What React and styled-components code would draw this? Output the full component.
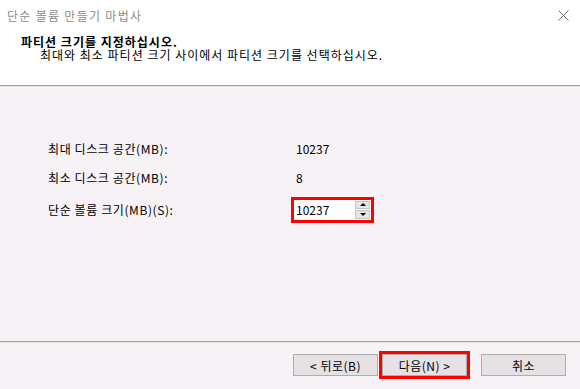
import React from 'react'
import styled, { createGlobalStyle } from 'styled-components'

const Global = createGlobalStyle`
    html, body {
        margin: 0;
        padding: 0;
        background: #ffffff;
    }
    body {
        font-family: "Noto Sans CJK KR", "Noto Sans", sans-serif;
        font-size: 12px;
        color: #000;
    }
`;

const Window = styled.div`
    width: 580px;
    height: 389px;
    display: flex;
    flex-direction: column;
    background: #f6f2f6;
    overflow: hidden;
`;

const TitleBar = styled.div`
    height: 30px;
    display: flex;
    align-items: center;
    justify-content: space-between;
    padding: 0 11px 0 7px;
    background: #ffffff;
    color: #8c8c8c;
    font-size: 12px;
    letter-spacing: 1.3px;
    box-sizing: border-box;
`;

const Close = styled.svg`
    width: 11px;
    height: 11px;
`;

const Header = styled.div`
    height: 55px;
    background: #ffffff;
    padding: 6px 0 0 21px;
    box-sizing: border-box;
    letter-spacing: 1px;
    h1 {
        margin: 0;
        font-size: 12px;
        font-weight: bold;
        line-height: 12px;
    }
    p {
        margin: 1px 0 0 19px;
        font-size: 12px;
        line-height: 12px;
    }
`;

const Divider = styled.div`
    height: 1px;
    background: #a0a0a0;
    border-bottom: 1px solid #e3e3e3;
`;

const Body = styled.div`
    flex: 1;
    padding: 47px 0 0 48px;
`;

const Row = styled.div`
    height: ${p => p.h}px;
    display: grid;
    grid-template-columns: 243px auto;
    align-items: center;
`;

const Label = styled.span`
    letter-spacing: 0.6px;
`;

const Value = styled.span`
    padding-left: 5px;
`;

const Spin = styled.div`
    width: 77px;
    height: 20px;
    display: flex;
    background: #ffffff;
    outline: 3px solid #ff0000;
    margin-left: 3px;
    box-sizing: border-box;
    span {
        flex: 1;
        padding-left: 2px;
        line-height: 20px;
    }
`;

const SpinButtons = styled.div`
    width: 15px;
    display: flex;
    flex-direction: column;
    margin: 1px 1px 1px 0;
    gap: 1px;
`;

const SpinButton = styled.div`
    flex: 1;
    background: #e6e6e6;
    border: 1px solid #c4c4c4;
    display: flex;
    align-items: center;
    justify-content: center;
    &::after {
        content: "";
        border-left: 3px solid transparent;
        border-right: 3px solid transparent;
        ${p => p.up ? 'border-bottom: 3px solid #000;' : 'border-top: 3px solid #000;'}
    }
`;

const Footer = styled.div`
    height: 46px;
    display: flex;
    align-items: center;
    justify-content: flex-end;
    padding: 0 14px 2px 0;
    box-sizing: border-box;
`;

const Button = styled.div`
    width: 85px;
    height: 22px;
    box-sizing: border-box;
    border: 1px solid #adadad;
    background: #e5e1e5;
    display: flex;
    align-items: center;
    justify-content: center;
    font-size: 12px;
    letter-spacing: 0.5px;
    margin-left: ${p => p.gap}px;
    ${p => p.marked && 'outline: 3px solid #ff0000; outline-offset: 0px;'}
`;

export default function App() {
    return (
        <Window>
            <Global />
            <TitleBar>
                <span>단순 볼륨 만들기 마법사</span>
                <Close viewBox="0 0 11 11">
                    <path d="M0.5 0.5 L10.5 10.5 M10.5 0.5 L0.5 10.5" stroke="#666" strokeWidth="1" fill="none" />
                </Close>
            </TitleBar>
            <Header>
                <h1>파티션 크기를 지정하십시오.</h1>
                <p>최대와 최소 파티션 크기 사이에서 파티션 크기를 선택하십시오.</p>
            </Header>
            <Divider />
            <Body>
                <Row h={29}>
                    <Label>최대 디스크 공간(MB):</Label>
                    <Value>10237</Value>
                </Row>
                <Row h={29}>
                    <Label>최소 디스크 공간(MB):</Label>
                    <Value>8</Value>
                </Row>
                <Row h={35}>
                    <Label>단순 볼륨 크기(MB)(S):</Label>
                    <Spin>
                        <span>10237</span>
                        <SpinButtons>
                            <SpinButton up />
                            <SpinButton />
                        </SpinButtons>
                    </Spin>
                </Row>
            </Body>
            <Divider />
            <Footer>
                <Button>&lt; 뒤로(B)</Button>
                <Button gap={4} marked>다음(N) &gt;</Button>
                <Button gap={14}>취소</Button>
            </Footer>
        </Window>
    )
}
